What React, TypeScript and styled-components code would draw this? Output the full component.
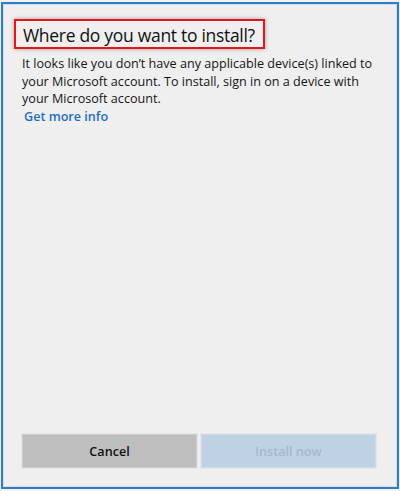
import React from "react";
import styled, { createGlobalStyle } from "styled-components";

const Global = createGlobalStyle`
  html, body { margin: 0; padding: 0; background: #f2f2f2; }
  body { font-family: "Open Sans", "Noto Sans", "Liberation Sans", sans-serif; overflow: hidden; }
`;

const Frame = styled.div`
  box-sizing: border-box;
  margin: 2px 1px 0 1px;
  width: 398px;
  height: 487px;
  border: 2px solid #2a7dcb;
  background: #efefef;
  box-shadow: inset 0 0 0 1px #dedede;
  display: flex;
  flex-direction: column;
  padding: 15px 21px 19px 19px;
`;

const TitleBox = styled.div`
  box-sizing: border-box;
  margin-left: -8px;
  width: 251px;
  height: 30px;
  border: 2px solid #e8141c;
  box-shadow: 0 0 4px rgba(0, 0, 0, 0.35);
  display: flex;
  align-items: center;
  padding-left: 7px;
  padding-top: 1px;
`;

const Title = styled.h1`
  margin: 0;
  font-size: 17.5px;
  font-weight: 400;
  color: #111;
  letter-spacing: -0.3px;
  white-space: nowrap;
`;

const Body = styled.p`
  margin: 6px 0 0 0;
  font-size: 12.6px;
  line-height: 17.5px;
  color: #151515;
`;

const Link = styled.a`
  display: block;
  margin-left: 2px;
  font-size: 12.6px;
  line-height: 17.5px;
  font-weight: 600;
  color: #1f6ebf;
  text-decoration: none;
`;

const Spacer = styled.div`
  flex: 1;
`;

const ButtonRow = styled.div`
  display: grid;
  grid-template-columns: 1fr 1fr;
  gap: 4px;
`;

const Button = styled.button<{ $primary?: boolean }>`
  height: 34px;
  border: 1px solid ${p => (p.$primary ? "#cfdbe6" : "#cdcdcd")};
  background: ${p => (p.$primary ? "#bfd2e3" : "#bebebe")};
  box-shadow: 0 0 0 1px #e6e6e6;
  color: ${p => (p.$primary ? "#a3b9ce" : "#111")};
  font-family: inherit;
  font-size: 12.6px;
  font-weight: 600;
  padding: 0;
`;

export default function App() {
  return (
    <>
      <Global />
      <Frame>
        <TitleBox>
          <Title>Where do you want to install?</Title>
        </TitleBox>
        <Body>
          It looks like you don’t have any applicable device(s) linked to your Microsoft account. To install, sign in on a
          device with your Microsoft account.
        </Body>
        <Link href="#">Get more info</Link>
        <Spacer />
        <ButtonRow>
          <Button>Cancel</Button>
          <Button $primary disabled>
            Install now
          </Button>
        </ButtonRow>
      </Frame>
    </>
  );
}
